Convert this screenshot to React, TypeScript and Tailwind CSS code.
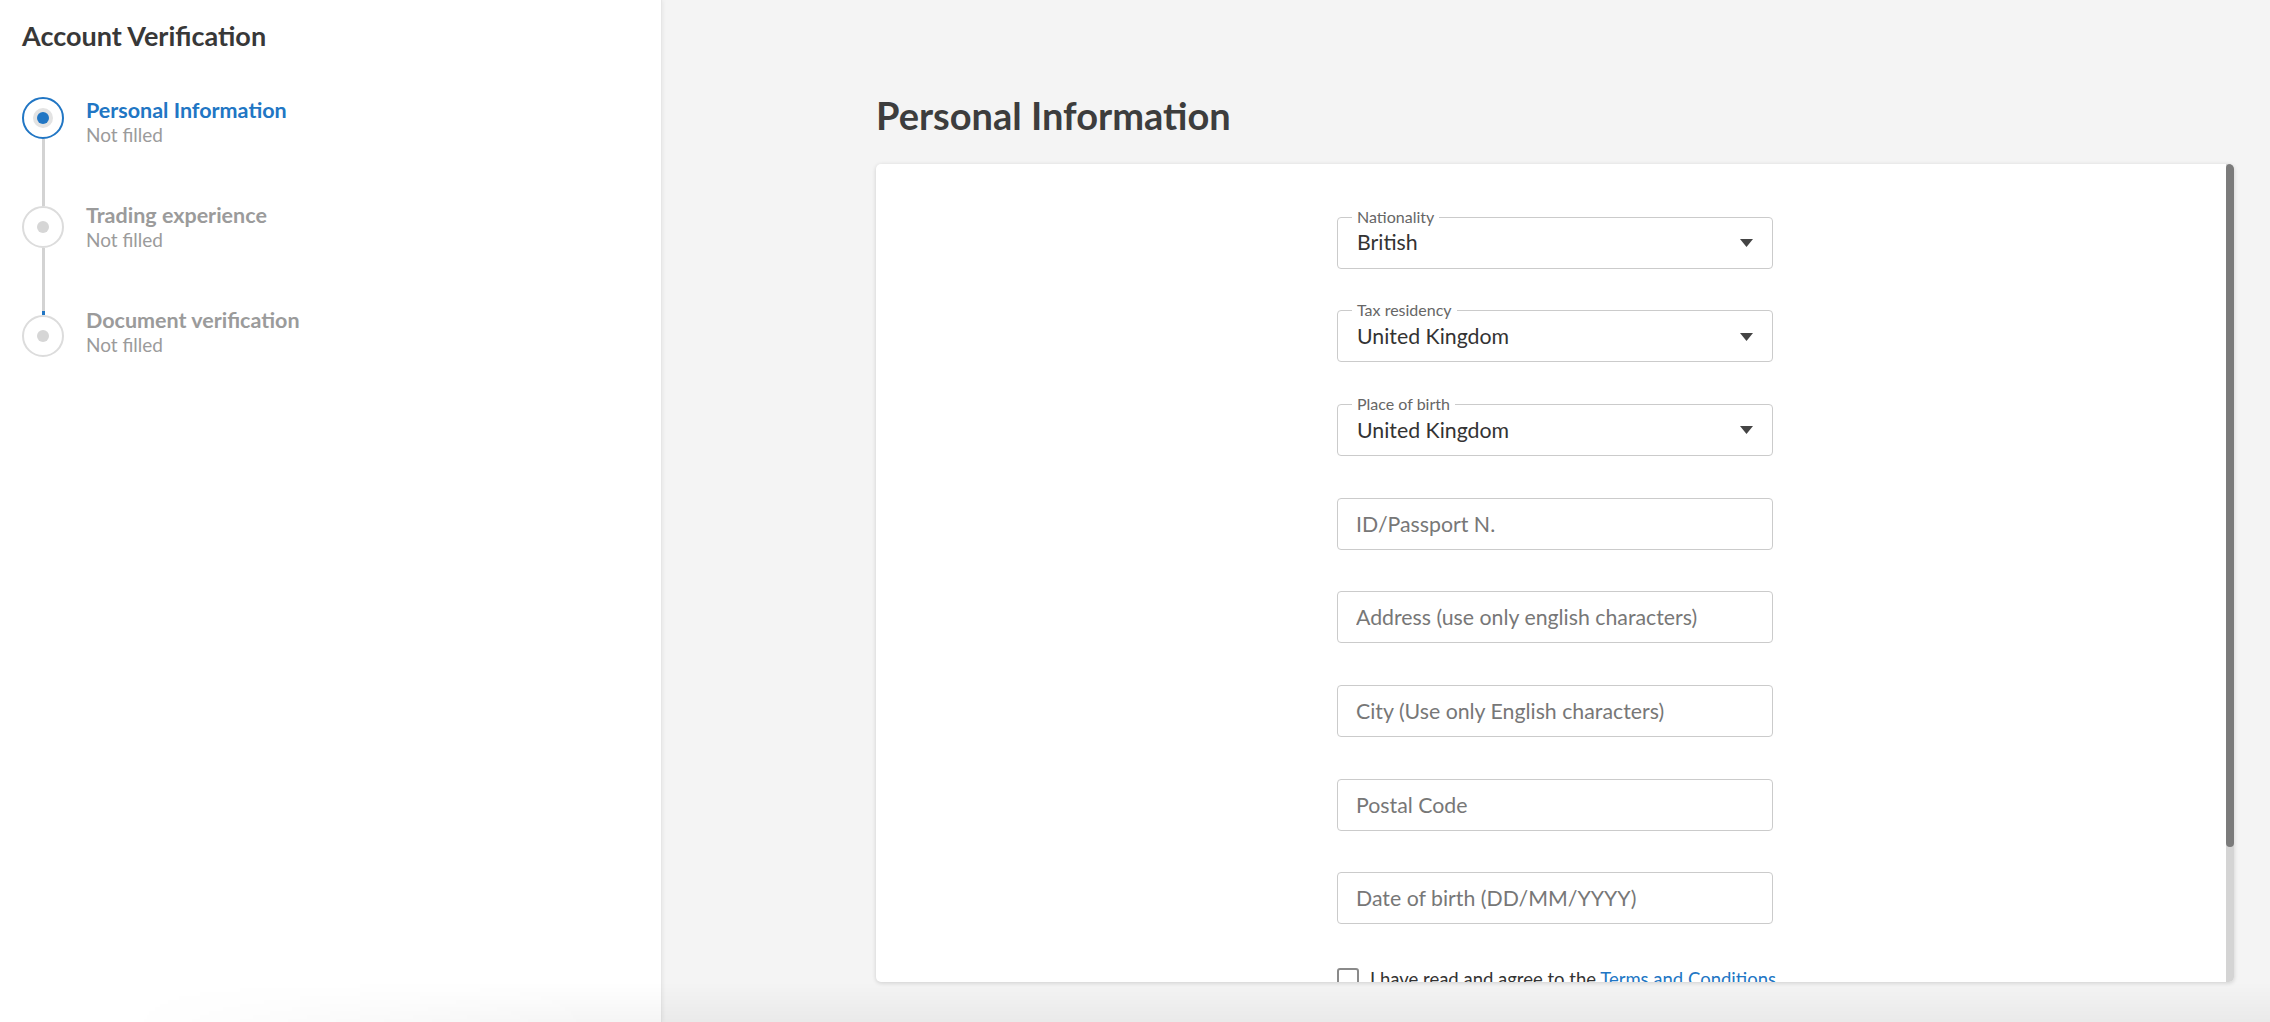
import React from 'react';

type Step = {
    title: string;
    status: string;
    active?: boolean;
    offset: string;
};

const steps: Step[] = [
    { title: 'Personal Information', status: 'Not filled', active: true, offset: 'mt-[1px]' },
    { title: 'Trading experience', status: 'Not filled', offset: '-mt-[3px]' },
    { title: 'Document verification', status: 'Not filled', offset: '-mt-[7px]' },
];

const selectFields = [
    { label: 'Nationality', value: 'British' },
    { label: 'Tax residency', value: 'United Kingdom' },
    { label: 'Place of birth', value: 'United Kingdom' },
];

const textFields = [
    'ID/Passport N.',
    'Address (use only english characters)',
    'City (Use only English characters)',
    'Postal Code',
    'Date of birth (DD/MM/YYYY)',
];

function StepMarker({ active }: { active?: boolean }) {
    if (active) {
        return (
            <div className="flex h-[42px] w-[42px] items-center justify-center rounded-full border-2 border-[#2176c4] bg-white">
                <div className="flex h-[20px] w-[20px] items-center justify-center rounded-full bg-[#e3e3e3]">
                    <div className="h-[12px] w-[12px] rounded-full bg-[#2176c4]" />
                </div>
            </div>
        );
    }
    return (
        <div className="flex h-[42px] w-[42px] items-center justify-center rounded-full border-2 border-[#dcdcdc] bg-white">
            <div className="h-[12px] w-[12px] rounded-full bg-[#d6d6d6]" />
        </div>
    );
}

function Stepper() {
    return (
        <div className="mt-[45px] flex flex-col">
            {steps.map((step, i) => (
                <div key={step.title} className="flex">
                    <div className="flex w-[42px] flex-col items-center">
                        <StepMarker active={step.active} />
                        {i < steps.length - 1 && (
                            <div className="flex h-[67px] w-[3px] flex-col justify-end bg-[#d3d3d3]">
                                {i === 1 && <div className="h-[4px] w-full bg-[#2176c4]" />}
                            </div>
                        )}
                    </div>
                    <div className={`ml-[22px] flex flex-col ${step.offset}`}>
                        <span className={`text-[21.5px] font-bold leading-[1.15] ${step.active ? 'text-[#2176c4]' : 'text-[#9b9b9b]'}`}>
                            {step.title}
                        </span>
                        <span className="mt-[1px] text-[19px] leading-[1.15] text-[#9b9b9b]">{step.status}</span>
                    </div>
                </div>
            ))}
        </div>
    );
}

function SelectField({ label, value }: { label: string; value: string }) {
    return (
        <div className="relative flex h-[52px] items-center justify-between rounded-[4px] border border-[#cbcbcb] bg-white pl-[19px] pr-[19px]">
            <span className="absolute left-[14px] top-[-11px] bg-white px-[5px] text-[16px] leading-[19px] text-[#666]">
                {label}
            </span>
            <span className="mt-[1px] text-[21.3px] leading-[1.2] text-[#333]">{value}</span>
            <svg width="13" height="8" viewBox="0 0 13 8" className="mt-[1px]">
                <path d="M0 0 L13 0 L6.5 8 Z" fill="#444" />
            </svg>
        </div>
    );
}

function TextField({ placeholder }: { placeholder: string }) {
    return (
        <input
            readOnly
            placeholder={placeholder}
            className="h-[52px] w-full rounded-[4px] border border-[#cbcbcb] bg-white px-[18px] text-[21.3px] text-[#333] outline-none placeholder:text-[#777]"
        />
    );
}

export default function App() {
    return (
        <div className="relative flex h-[1022px] w-[2270px] overflow-hidden font-['Lato',sans-serif]">
            <aside className="relative z-10 flex w-[662px] shrink-0 flex-col border-r border-[#e6e6e6] bg-white px-[22px] pt-[20px] shadow-[1px_0_4px_rgba(0,0,0,0.06)]">
                <h1 className="text-[27px] font-bold leading-[1.2] text-[#383838]">Account Verification</h1>
                <Stepper />
            </aside>

            <main className="flex flex-1 flex-col bg-[#f4f4f4] pl-[214px] pr-[36px] pt-[93px]">
                <h2 className="text-[38px] font-bold leading-[1.2] text-[#3d3d3d]">Personal Information</h2>
                <div className="mt-[25px] flex h-[818px] overflow-hidden rounded-[5px] bg-white shadow-[0_1px_4px_rgba(0,0,0,0.16)]">
                    <div className="flex-1 overflow-hidden pl-[461px] pt-[53px]">
                        <div className="flex w-[436px] flex-col gap-[41.7px]">
                            {selectFields.map(f => (
                                <SelectField key={f.label} label={f.label} value={f.value} />
                            ))}
                            {textFields.map(p => (
                                <TextField key={p} placeholder={p} />
                            ))}
                        </div>
                        <div className="mt-[44px] flex items-start gap-[11px]">
                            <div className="h-[22px] w-[22px] shrink-0 rounded-[3px] border-2 border-[#8a8a8a]" />
                            <span className="text-[18.5px] leading-[1.2] text-[#333]">
                                I have read and agree to the <span className="text-[#2176c4]">Terms and Conditions</span>
                            </span>
                        </div>
                    </div>
                    {/* fake scrollbar */}
                    <div className="flex w-[8px] flex-col bg-[#d4d4d4]">
                        <div className="h-[683px] rounded-full bg-[#7b7b7b]" />
                    </div>
                </div>
            </main>

            <div className="pointer-events-none absolute inset-x-0 bottom-0 z-20 h-[40px] bg-gradient-to-b from-transparent to-black/[0.04] [mask-image:linear-gradient(to_right,transparent_120px,black_600px)]" />
        </div>
    );
}
